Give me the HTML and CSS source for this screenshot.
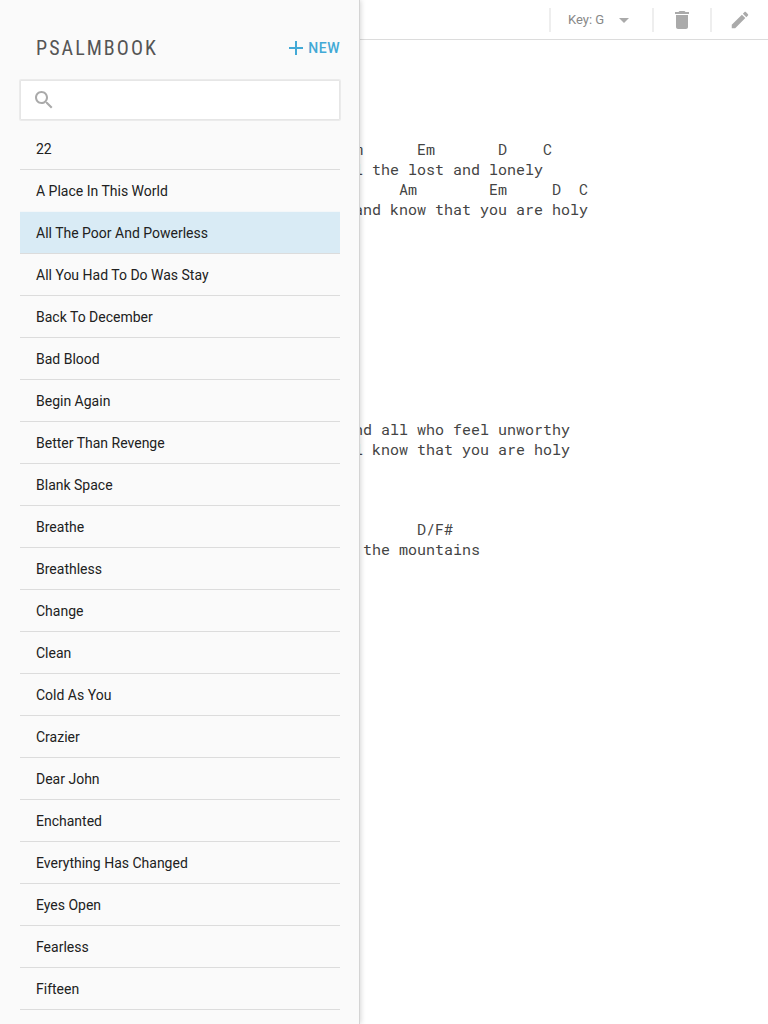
FILE: index.html
```html
<!DOCTYPE html>
<html lang="en">
<head>
<meta charset="utf-8">
<title>Psalmbook</title>
<link rel="stylesheet" href="styles.css">
</head>
<body>
<main class="page">
  <header class="toolbar">
    <div class="tool key"><span>Key: G</span><svg width="10" height="5" viewBox="0 0 10 5"><path d="M0 0h10L5 5z"/></svg></div>
    <div class="tool"><svg width="24" height="24" viewBox="0 0 24 24"><path d="M6 19c0 1.100.9 2 2 2h8c1.100 0 2-.9 2-2V7H6v12zM19 4h-3.500l-1-1h-5l-1 1H5v2h14V4z"/></svg></div>
    <div class="tool"><svg width="22" height="22" viewBox="0 0 24 24"><path d="M3 17.250V21h3.750L17.810 9.940l-3.750-3.750L3 17.250zM20.710 7.040c.39-.39.39-1.020 0-1.410l-2.340-2.340c-.39-.39-1.020-.39-1.410 0l-1.830 1.830 3.750 3.750 1.830-1.830z"/></svg></div>
  </header>
  <pre class="song">m      Em       D    C
l the lost and lonely
     Am        Em     D  C
and know that you are holy










nd all who feel unworthy
l know that you are holy



       D/F#
 the mountains</pre>
</main>
<aside class="drawer">
  <div class="head">
    <h1 class="title">PSALMBOOK</h1>
    <div class="new"><svg width="14" height="14" viewBox="0 0 14 14"><path d="M6 0h2v6h6v2H8v6H6V8H0V6h6z"/></svg><span>NEW</span></div>
  </div>
  <div class="search"><svg width="24" height="24" viewBox="0 0 24 24"><path d="M15.500 14h-.79l-.28-.27C15.410 12.590 16 11.110 16 9.500 16 5.910 13.090 3 9.500 3S3 5.910 3 9.500 5.910 16 9.500 16c1.610 0 3.090-.59 4.230-1.570l.27.28v.79l5 4.990L20.490 19l-4.990-5zm-6 0C7.010 14 5 11.990 5 9.500S7.010 5 9.500 5 14 7.010 14 9.500 11.990 14 9.500 14z"/></svg></div>
  <ul class="list">
    <li>22</li>
    <li class="before-active">A Place In This World</li>
    <li class="active">All The Poor And Powerless</li>
    <li>All You Had To Do Was Stay</li>
    <li>Back To December</li>
    <li>Bad Blood</li>
    <li>Begin Again</li>
    <li>Better Than Revenge</li>
    <li>Blank Space</li>
    <li>Breathe</li>
    <li>Breathless</li>
    <li>Change</li>
    <li>Clean</li>
    <li>Cold As You</li>
    <li>Crazier</li>
    <li>Dear John</li>
    <li>Enchanted</li>
    <li>Everything Has Changed</li>
    <li>Eyes Open</li>
    <li>Fearless</li>
    <li>Fifteen</li>
  </ul>
</aside>
</body>
</html>
```
FILE: styles.css
```css
* { box-sizing: border-box; }
body { margin: 0; height: 1024px; overflow: hidden; background: #fff; font-family: Roboto, sans-serif; color: #212121; position: relative; }
svg { display: block; fill: #aaa; }
.toolbar { height: 40px; border-bottom: 1px solid #dcdcdc; display: flex; justify-content: flex-end; align-items: center; }
.tool { width: 58px; height: 24px; border-left: 2px solid #eee; display: flex; align-items: center; justify-content: center; }
.key { width: 103px; justify-content: flex-start; padding-left: 17px; gap: 15px; font-size: 13px; color: #888; }
.key svg { margin-top: 1px; }
.song { margin: 99px 0 0 354px; font: 15px/20px "Roboto Mono", "DejaVu Sans Mono", monospace; color: #444; }
.drawer { position: absolute; left: 0; top: 0; width: 360px; height: 1024px; padding: 0 20px; background: #fafafa; border-right: 1px solid #d4d4d4; box-shadow: 1px 0 5px rgba(0,0,0,.16); }
.head { height: 80px; padding: 16px 0 0 16px; display: flex; align-items: center; justify-content: space-between; width: 320px; }
.title { margin: 0; font: 400 20px/24px "Roboto Condensed", Roboto, sans-serif; letter-spacing: 2.05px; color: #555; }
.new { display: flex; align-items: center; gap: 5px; font-size: 14px; font-weight: 500; letter-spacing: .5px; color: #42a9d6; }
.new svg { fill: #42a9d6; }
.search { width: 320px; height: 40px; border: 1px solid #e6e6e6; box-shadow: 0 0 0 1px #ebebeb; border-radius: 1px; background: #fff; display: flex; align-items: center; padding-left: 11px; }
.list { list-style: none; margin: 8px 0 0; padding: 0; width: 320px; }
.list li { height: 42px; line-height: 42px; padding-left: 16px; font-size: 14px; border-bottom: 1px solid #dcdcdc; }
.list .before-active { border-bottom-color: #f4f7f9; }
.list .active { background: #d9ebf5; }
```
